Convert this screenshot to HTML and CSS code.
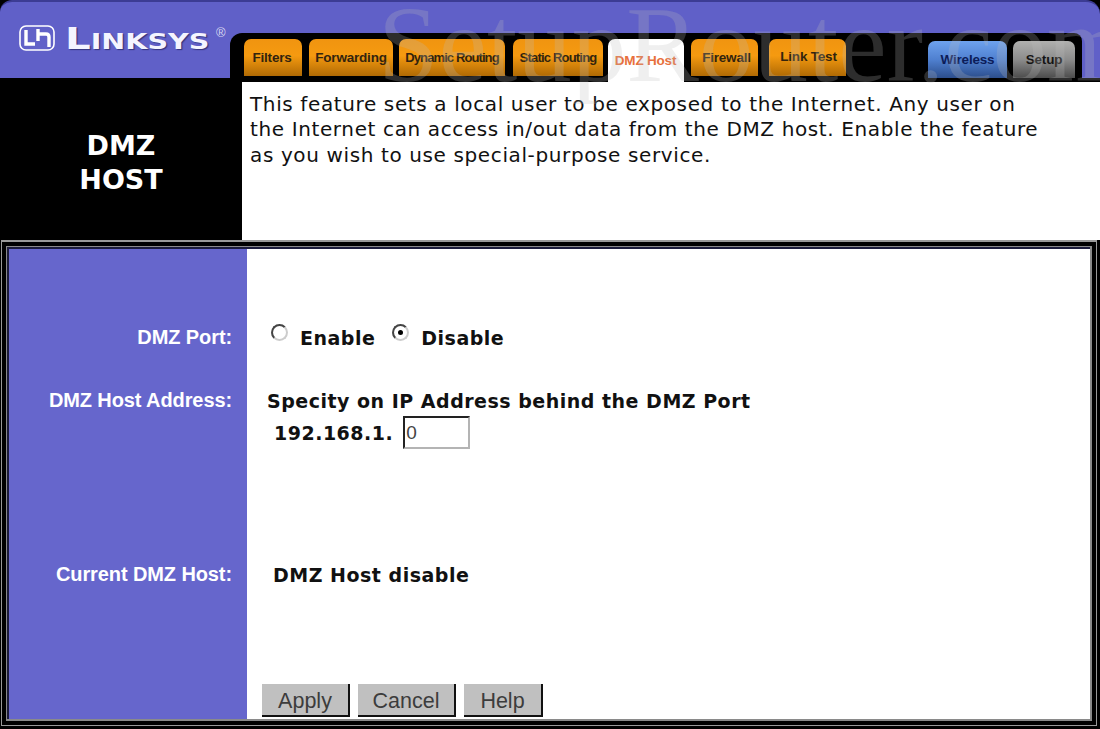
FILE: index.html
```html
<!DOCTYPE html>
<html lang="en">
<head>
  <meta charset="UTF-8" />
  <title>DMZ Host</title>
  <link rel="stylesheet" href="styles.css">
</head>
<body>
  <div class="page">
    <div class="header">
      <div class="brand">
        <svg class="brand-icon" width="36" height="26" viewBox="0 0 36 26">
          <rect x="1" y="1" width="34" height="24" rx="6" fill="#6161c8" stroke="#fff" stroke-width="1.6"/>
          <path d="M7 5v14h9" fill="none" stroke="#fff" stroke-width="3.4"/>
          <path d="M19 4v12M19 9h8q3 0 3 3v10" fill="none" stroke="#fff" stroke-width="3.4"/>
        </svg>
        <span class="brand-name">Linksys</span><span class="brand-reg">®</span>
      </div>
      <div class="tabs">
        <div class="tab tab-filters">Filters</div>
        <div class="tab tab-forward">Forwarding</div>
        <div class="tab tab-dynamic">Dynamic Routing</div>
        <div class="tab tab-static">Static Routing</div>
        <div class="tab tab-dmz active">DMZ Host</div>
        <div class="tab tab-firewall">Firewall</div>
        <div class="tab tab-link">Link Test</div>
        <div class="tab tab-wireless blue">Wireless</div>
        <div class="tab tab-setup grey">Setup</div>
      </div>
    </div>

    <div class="intro">
      <h1 class="intro-title">DMZ<br>HOST</h1>
      <p class="intro-text">This feature sets a local user to be exposed to the Internet. Any user on<br>the Internet can access in/out data from the DMZ host. Enable the feature<br>as you wish to use special-purpose service.</p>
    </div>

    <div class="frame">
      <div class="frame-in">
        <div class="side"></div>
        <div></div>

        <div class="side label">DMZ Port:</div>
        <div class="value port-row">
          <label class="radio-label"><input type="radio" name="dmz"> Enable</label>
          <label class="radio-label"><input type="radio" name="dmz" checked> Disable</label>
        </div>

        <div class="side label">DMZ Host Address:</div>
        <div class="value">
          <div>Specity on IP Address behind the DMZ Port</div>
          <div class="ip-row">192.168.1. <input class="ip-input" type="text" value="0"></div>
        </div>

        <div class="side label">Current DMZ Host:</div>
        <div class="value current">DMZ Host disable</div>

        <div class="side"></div>
        <div class="actions">
          <button class="btn btn-apply">Apply</button>
          <button class="btn btn-cancel">Cancel</button>
          <button class="btn btn-help">Help</button>
        </div>
      </div>
    </div>

    <div class="watermark">SetupRouter.com</div>
  </div>
</body>
</html>
```

FILE: styles.css
```css
* {
  margin: 0;
  padding: 0;
  box-sizing: border-box;
}
body {
  background: #000;
  overflow: hidden;
  font-family: "Liberation Sans", sans-serif;
}
.page {
  position: relative;
  width: 1100px;
  height: 729px;
  overflow: hidden;
  background: #000;
}
.header {
  height: 82px;
  display: flex;
  background: linear-gradient(#6060c8 76px, #000 76px);
  border-top: 2px solid #3c3c94;
  border-radius: 12px 14px 0 0;
}
.brand {
  width: 230px;
  display: flex;
  align-items: flex-start;
  padding: 23px 0 0 19px;
  color: #fff;
}
.brand-icon {
  flex: none;
}
.brand-name {
  display: inline-block;
  width: 147px;
  font-family: "DejaVu Sans", sans-serif;
  font-weight: bold;
  font-variant: small-caps;
  font-size: 31px;
  line-height: 26px;
  margin-left: 10px;
  color: #f4f4ff;
  text-shadow: 1px 1px 1px #33337a;
  transform: scaleX(1.3);
  transform-origin: left center;
  white-space: nowrap;
}
.brand-reg {
  font-size: 13px;
  margin: 0 0 0 4px;
  color: #d8d8f0;
}
.tabs {
  flex: none;
  width: 852px;
  margin-top: 31px;
  height: 49px;
  background: #000;
  border-radius: 12px 8px 0 0;
  display: flex;
  align-items: flex-start;
  padding: 6px 0 0 14px;
}
.tab {
  height: 37px;
  display: flex;
  align-items: center;
  justify-content: center;
  border-radius: 7px 7px 0 0;
  background: linear-gradient(#f09410, #f59a10 45%, #b06a04);
  color: #33240e;
  font-weight: bold;
  font-size: 13.5px;
  letter-spacing: -0.2px;
  white-space: nowrap;
}
.tab.active {
  height: 43px;
  background: #fff;
  color: #e8703c;
}
.tab.blue {
  margin-top: 2px;
  background: linear-gradient(#6ea2ee, #4f80d0 50%, #2c4e8c);
  color: #0c1c58;
}
.tab.grey {
  margin-top: 2px;
  background: linear-gradient(#b0b0ae, #8c8c8c 50%, #4c4c4c);
  color: #141414;
}
.tab-filters { width: 58px; padding-right: 2px; }
.tab-forward { width: 84px; margin-left: 7px; }
.tab-dynamic { width: 106px; margin-left: 6px; font-size: 13px; letter-spacing: -0.9px; }
.tab-static { width: 90px; margin-left: 8px; font-size: 13px; letter-spacing: -0.8px; }
.tab-dmz { width: 76px; margin-left: 5px; padding-right: 1px; }
.tab-firewall { width: 67px; margin-left: 7px; padding-left: 4px; }
.tab-link { width: 77px; margin-left: 11px; padding-left: 2px; padding-bottom: 2px; }
.tab-wireless { width: 79px; margin-left: 82px; }
.tab-setup { width: 62px; margin-left: 6px; }

.intro {
  height: 158px;
  display: flex;
  background: #fff;
}
.intro-title {
  width: 242px;
  flex: none;
  background: #000;
  color: #fff;
  text-align: center;
  font-family: "DejaVu Sans", sans-serif;
  font-size: 27px;
  line-height: 34px;
  padding-top: 47px;
}
.intro-text {
  font-family: "DejaVu Sans", sans-serif;
  font-size: 20px;
  line-height: 25.4px;
  letter-spacing: 0.62px;
  color: #111;
  padding: 10px 0 0 8px;
  white-space: nowrap;
}

.frame {
  background: #000;
  border: 1px solid #999;
  border-top-width: 2px;
  margin-left: 1px;
  margin-right: 3px;
  margin-bottom: 3px;
  height: 486px;
  padding: 4px;
}
.frame-in {
  height: 100%;
  border: 1px solid #8a8a8a;
  border-width: 1px 2px 2px 1px;
  box-shadow: inset 2px 2px 0 #1c1c3c;
  background: #fff;
  display: grid;
  grid-template-columns: 240px 1fr;
  grid-template-rows: 71px 63px 174px 110px 1fr;
}
.side {
  background: #6666cc;
  margin-left: 2px;
}
.side:first-child {
  margin-top: 2px;
}
.label {
  color: #fff;
  font-weight: bold;
  font-size: 20px;
  letter-spacing: -0.1px;
  text-align: right;
  padding: 8px 15px 0 0;
  white-space: nowrap;
}
.value {
  font-family: "DejaVu Sans", sans-serif;
  font-weight: bold;
  font-size: 19px;
  letter-spacing: 0.5px;
  color: #111;
  padding: 9px 0 0 20px;
  white-space: nowrap;
}
.port-row {
  display: flex;
  gap: 17px;
  padding-left: 24px;
}
.radio-label {
  display: flex;
  gap: 12px;
}
.radio-label input {
  appearance: none;
  width: 17px;
  height: 17px;
  margin-top: -3px;
  border-radius: 50%;
  border: 2px solid #444;
  border-right-color: #ccc;
  border-bottom-color: #ccc;
  background: #fff;
  display: grid;
  place-items: center;
}
.radio-label input:checked::after {
  content: "";
  width: 5px;
  height: 5px;
  border-radius: 50%;
  background: #000;
}
.ip-row {
  display: flex;
  align-items: center;
  gap: 10px;
  padding-left: 7px;
  margin-top: 4px;
}
.ip-input {
  width: 67px;
  height: 33px;
  border: 2px solid #b4b4b4;
  border-top-color: #222;
  border-left-color: #222;
  font-family: "Liberation Sans", sans-serif;
  font-size: 19px;
  color: #444;
  padding-left: 1px;
  outline: none;
}
.current {
  padding-left: 26px;
}
.actions {
  display: flex;
  align-items: flex-end;
  gap: 8px;
  padding: 0 0 2px 15px;
}
.btn {
  height: 33px;
  padding-top: 3px;
  background: #c0c0c0;
  border: 0;
  border-right: 2px solid #111;
  border-bottom: 2px solid #111;
  font-family: "Liberation Sans", sans-serif;
  font-size: 21.5px;
  color: #3c3c3c;
}
.btn-apply { width: 88px; }
.btn-cancel { width: 98px; }
.btn-help { width: 79px; }

.watermark {
  position: absolute;
  left: 378px;
  top: -18px;
  font-family: "Liberation Serif", serif;
  font-size: 109px;
  color: rgba(190, 190, 190, 0.24);
  white-space: nowrap;
  pointer-events: none;
}
```
